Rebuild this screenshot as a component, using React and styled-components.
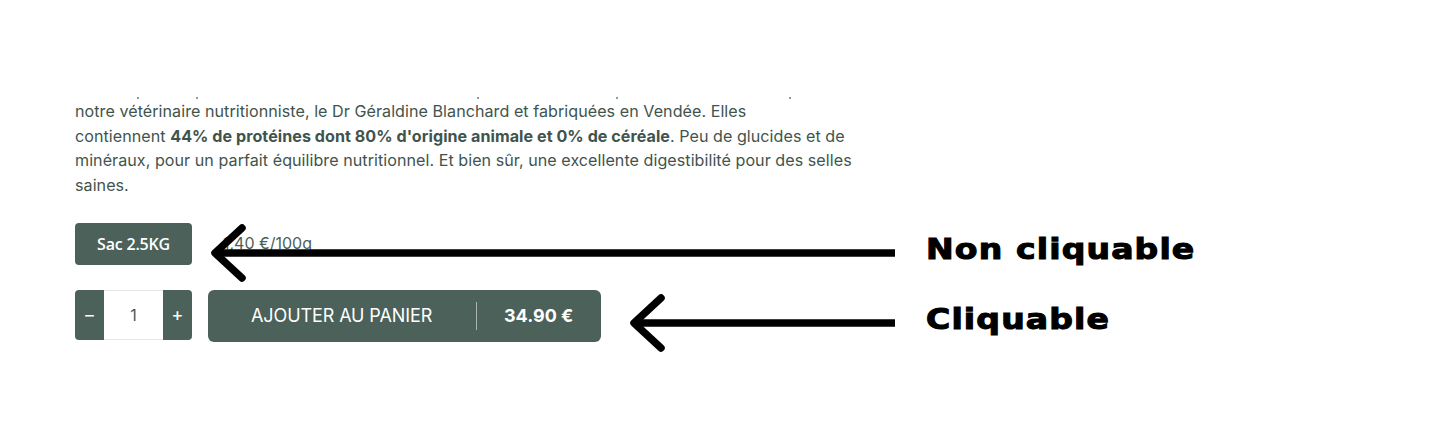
import React from "react";
import styled, { createGlobalStyle } from "styled-components";

const Global = createGlobalStyle`
  html, body { margin: 0; padding: 0; background: #ffffff; }
  body { width: 1456px; height: 436px; overflow: hidden; }
`;

const Page = styled.div`
  position: relative;
  width: 1456px;
  height: 436px;
  box-sizing: border-box;
  padding: 96px 0 0 75px;
  font-family: Inter, "Liberation Sans", sans-serif;
`;

const Product = styled.section`
  display: flex;
  flex-direction: column;
  width: 780px;
`;

const CutLine = styled.div`
  display: flex;
  height: 3px;
  align-items: center;
`;

const Dot = styled.span`
  width: 2px;
  height: 2px;
  border-radius: 1px;
  background: #6d7d77;
  margin-left: ${(p) => p.$gap}px;
`;

const Description = styled.p`
  margin: 0;
  color: #3f544d;
  font-size: 16.1px;
  line-height: 24.7px;
  letter-spacing: 0.05px;
  white-space: nowrap;
  b { font-weight: 700; }
`;

const VariantRow = styled.div`
  display: flex;
  align-items: center;
  gap: 31px;
  margin-top: 25px;
`;

const VariantTag = styled.div`
  box-sizing: border-box;
  width: 117px;
  height: 42px;
  border-radius: 4px;
  background: #4b6159;
  color: #ffffff;
  display: flex;
  align-items: center;
  justify-content: center;
  font-family: "Open Sans", sans-serif;
  font-weight: 600;
  font-size: 16px;
  letter-spacing: -0.2px;
`;

const UnitPrice = styled.span`
  color: #4d5f58;
  font-size: 16px;
  margin-top: -2px;
`;

const BuyRow = styled.div`
  display: flex;
  align-items: flex-start;
  gap: 16px;
  margin-top: 25px;
`;

const Qty = styled.div`
  display: flex;
  height: 50px;
  width: 117px;
  border-radius: 4px;
  overflow: hidden;
`;

const QtyBtn = styled.button`
  width: 29px;
  border: 0;
  padding: 0;
  background: #4b6159;
  color: #ffffff;
  font-family: "Open Sans", sans-serif;
  font-size: 18px;
  font-weight: 600;
  display: flex;
  align-items: center;
  justify-content: center;
`;

const QtyValue = styled.div`
  flex: 1;
  box-sizing: border-box;
  border-top: 1px solid #e6e6e4;
  border-bottom: 1px solid #e6e6e4;
  background: #ffffff;
  color: #4b5a55;
  font-size: 16px;
  display: flex;
  align-items: center;
  justify-content: center;
`;

const AddButton = styled.button`
  box-sizing: border-box;
  width: 393px;
  height: 52px;
  border: 0;
  border-radius: 6px;
  background: #4b6159;
  color: #ffffff;
  display: flex;
  align-items: center;
  padding: 0 0 0 43px;
  font-family: Inter, "Liberation Sans", sans-serif;
  font-size: 18px;
`;

const AddLabel = styled.span`
  font-weight: 400;
  width: 225px;
  text-align: left;
  letter-spacing: -0.1px;
`;

const Divider = styled.span`
  width: 1px;
  height: 28px;
  background: #a9b5b0;
  margin-right: 27px;
`;

const Price = styled.span`
  font-weight: 700;
`;

const Notes = styled.svg`
  position: absolute;
  left: 0;
  top: 0;
  pointer-events: none;
`;

const Note = styled.div`
  position: absolute;
  left: 926px;
  top: ${(p) => p.$top}px;
  font-family: "DejaVu Sans", sans-serif;
  font-weight: 700;
  font-size: 29px;
  line-height: 1;
  color: #000000;
  -webkit-text-stroke: 1.1px #000;
  letter-spacing: 1px;
  transform: scaleX(1.14);
  transform-origin: left center;
  white-space: nowrap;
`;

function Arrow({ tipX, y, endX }) {
  return (
    <g stroke="#000" strokeWidth="7.5" strokeLinecap="round" strokeLinejoin="round" fill="none">
      <line x1={tipX + 2} y1={y} x2={endX} y2={y} strokeLinecap="butt" />
      <polyline points={`${tipX + 27},${y - 25} ${tipX},${y} ${tipX + 27},${y + 25}`} />
    </g>
  );
}

export default function App() {
  return (
    <>
      <Global />
      <Page>
        <Product>
          <CutLine>
            <Dot $gap={62} />
            <Dot $gap={57} />
            <Dot $gap={279} />
            <Dot $gap={137} />
            <Dot $gap={171} />
          </CutLine>
          <Description>
            notre vétérinaire nutritionniste, le Dr Géraldine Blanchard et fabriquées en Vendée. Elles
            <br />
            contiennent <b>44% de protéines dont 80% d'origine animale et 0% de céréale</b>. Peu de glucides et de
            <br />
            minéraux, pour un parfait équilibre nutritionnel. Et bien sûr, une excellente digestibilité pour des selles
            <br />
            saines.
          </Description>
          <VariantRow>
            <VariantTag>Sac 2.5KG</VariantTag>
            <UnitPrice>1,40 €/100g</UnitPrice>
          </VariantRow>
          <BuyRow>
            <Qty>
              <QtyBtn>−</QtyBtn>
              <QtyValue>1</QtyValue>
              <QtyBtn>+</QtyBtn>
            </Qty>
            <AddButton>
              <AddLabel>AJOUTER AU PANIER</AddLabel>
              <Divider />
              <Price>34.90 €</Price>
            </AddButton>
          </BuyRow>
        </Product>
        <Notes width="1456" height="436" viewBox="0 0 1456 436">
          <Arrow tipX={215} y={253} endX={895} />
          <Arrow tipX={634} y={323} endX={895} />
        </Notes>
        <Note $top={235}>Non cliquable</Note>
        <Note $top={305}>Cliquable</Note>
      </Page>
    </>
  );
}
